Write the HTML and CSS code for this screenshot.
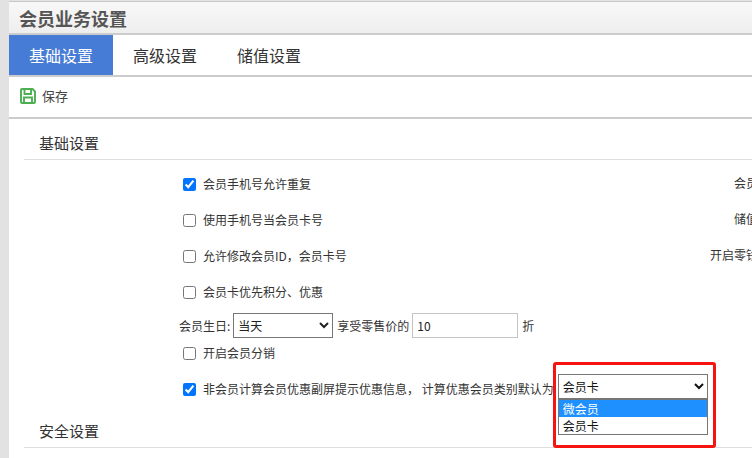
FILE: index.html
```html
<!DOCTYPE html>
<html lang="zh-CN">
<head>
<meta charset="utf-8">
<title>会员业务设置</title>
<link rel="stylesheet" href="styles.css">
</head>
<body>
<main class="panel">
  <h1 class="title">会员业务设置</h1>
  <nav class="tabs">
    <a class="tab active">基础设置</a>
    <a class="tab">高级设置</a>
    <a class="tab">储值设置</a>
  </nav>
  <div class="toolbar">
    <svg class="save-icon" viewBox="0 0 16 16" width="16" height="16" fill="none" stroke="#4caf50" stroke-width="1.900" aria-hidden="true">
      <path d="M2 1h10.500L15 3.500V14a1 1 0 0 1-1 1H2a1 1 0 0 1-1-1V2a1 1 0 0 1 1-1z"/>
      <path d="M4.500 1v5h6.500V1"/>
      <path d="M4 15V9.500h8V15"/>
    </svg>
    <span>保存</span>
  </div>
  <section class="section">
    <h2 class="section-title">基础设置</h2>
    <div class="form">
      <div class="col-left">
        <label class="row"><input type="checkbox" checked><span>会员手机号允许重复</span></label>
        <label class="row"><input type="checkbox"><span>使用手机号当会员卡号</span></label>
        <label class="row"><input type="checkbox"><span>允许修改会员ID，会员卡号</span></label>
        <label class="row"><input type="checkbox"><span>会员卡优先积分、优惠</span></label>
        <div class="birthday">
          <span>会员生日:</span>
          <select class="select-day"><option>当天</option></select>
          <span>享受零售价的</span>
          <input class="discount" type="text" value="10">
          <span>折</span>
        </div>
        <label class="row compact"><input type="checkbox"><span>开启会员分销</span></label>
        <div class="row last">
          <input type="checkbox" checked>
          <span>非会员计算会员优惠副屏提示优惠信息，&nbsp;计算优惠会员类别默认为</span>
          <div class="dropdown">
            <select class="select-type"><option>会员卡</option></select>
            <ul class="menu">
              <li class="selected">微会员</li>
              <li>会员卡</li>
            </ul>
            <div class="highlight"></div>
          </div>
        </div>
      </div>
      <div class="col-right">
        <div class="right-label">会员卡有效期</div>
        <div class="right-label">储值卡有效期</div>
        <div class="right-label">开启零钱支付功能</div>
      </div>
    </div>
  </section>
  <section class="section">
    <h2 class="section-title tail">安全设置</h2>
  </section>
</main>
</body>
</html>
```
FILE: styles.css
```css
* { box-sizing: border-box; }
html, body { height: 100%; }
body {
  margin: 0;
  padding: 1px 0 0 9px;
  overflow: hidden;
  background: #e2e2e2;
  font-family: "Noto Sans CJK SC", "Liberation Sans", sans-serif;
  font-size: 12px;
  color: #333;
}
.panel {
  background: #fff;
  height: 100%;
  overflow: hidden;
  border-top: 1px solid #c8c8c8;
}
.title {
  margin: 0;
  height: 33px;
  padding-left: 10px;
  background: linear-gradient(#f8f8f8, #eee);
  border-bottom: 2px solid #ccc;
  font-size: 18px;
  line-height: 32px;
  font-weight: 700;
  color: #555;
}
.tabs {
  display: flex;
  height: 42px;
  border-bottom: 2px solid #ccc;
}
.tab {
  width: 104px;
  text-align: center;
  font-size: 16px;
  line-height: 40px;
  color: #333;
}
.tab.active { background: #477cd6; color: #fff; }
.toolbar {
  display: flex;
  align-items: center;
  gap: 6px;
  height: 42px;
  padding: 0 0 3px 11px;
  border-bottom: 2px solid #ccc;
  font-size: 13px;
  color: #444;
}
.save-icon { display: block; }
.section { margin-left: 15px; }
.section-title {
  margin: 0;
  height: 41px;
  padding: 14px 0 0 15px;
  border-bottom: 1px solid #ddd;
  font-size: 15px;
  line-height: 20px;
  font-weight: 400;
  color: #333;
}
.form { display: flex; }
.col-left {
  flex: none;
  width: 670px;
  padding: 6px 0 0 150px;
}
.row {
  display: flex;
  align-items: center;
  height: 36px;
  padding-left: 9px;
  white-space: nowrap;
}
.row > span { margin-top: -2px; }
.row.compact { height: 26px; margin-top: 1px; }
.row.last { height: 36px; margin-top: 5px; }
.row input[type="checkbox"] { margin: 0 7px 0 0; width: 13px; height: 13px; flex: none; }
.birthday {
  display: flex;
  align-items: center;
  gap: 4px;
  height: 28px;
  margin: 1px 0 0 5px;
  white-space: nowrap;
}
.select-day {
  width: 100px;
  height: 25px;
  margin-left: -1px;
  font: inherit;
  color: #222;
  background: #fff;
}
.discount {
  width: 106px;
  height: 25px;
  margin-left: -1px;
  padding: 0 4px;
  border: 1px solid #c4c4c4;
  font: inherit;
  color: #222;
}
.dropdown {
  position: relative;
  margin: -6px 0 0 4px;
  width: 150px;
  height: 24px;
}
.select-type {
  display: block;
  width: 150px;
  height: 25px;
  font: inherit;
  color: #111;
  background: #fff;
}
.menu {
  position: absolute;
  top: 25px;
  left: 0;
  width: 150px;
  margin: 0;
  padding: 0;
  list-style: none;
  background: #fff;
  border: 1px solid #767676;
  color: #111;
}
.menu li { height: 17px; line-height: 17px; padding-left: 4px; }
.menu li.selected { background: #1e90ff; color: #fff; }
.highlight {
  position: absolute;
  top: -12px;
  left: -5px;
  width: 163px;
  height: 86px;
  border: 3px solid #f5140f;
  border-radius: 3px;
}
.col-right {
  flex: none;
  width: 120px;
  padding-top: 6px;
}
.right-label {
  height: 36px;
  line-height: 34px;
  width: 112px;
  text-align: right;
  white-space: nowrap;
}
```
